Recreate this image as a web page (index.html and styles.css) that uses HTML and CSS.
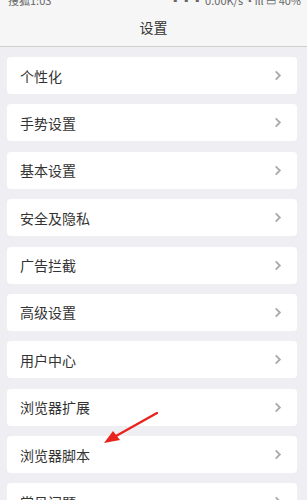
FILE: index.html
```html
<!DOCTYPE html>
<html lang="zh">
<head>
<meta charset="utf-8">
<link rel="stylesheet" href="styles.css">
</head>
<body>
<div class="page">
  <header class="topbar">
    <div class="status">
      <span class="status-left">搜狐1:03</span>
      <span class="status-right">▪▪▪ 0.00K/s ◔ ıll ▭ 40%</span>
    </div>
    <div class="title">设置</div>
  </header>
  <ul class="list">
    <li class="item"><span>个性化</span><svg class="chev" viewBox="0 0 8 12"><path d="M1.5 1.5 L6 6 L1.5 10.5"/></svg></li>
    <li class="item"><span>手势设置</span><svg class="chev" viewBox="0 0 8 12"><path d="M1.5 1.5 L6 6 L1.5 10.5"/></svg></li>
    <li class="item"><span>基本设置</span><svg class="chev" viewBox="0 0 8 12"><path d="M1.5 1.5 L6 6 L1.5 10.5"/></svg></li>
    <li class="item"><span>安全及隐私</span><svg class="chev" viewBox="0 0 8 12"><path d="M1.5 1.5 L6 6 L1.5 10.5"/></svg></li>
    <li class="item"><span>广告拦截</span><svg class="chev" viewBox="0 0 8 12"><path d="M1.5 1.5 L6 6 L1.5 10.5"/></svg></li>
    <li class="item"><span>高级设置</span><svg class="chev" viewBox="0 0 8 12"><path d="M1.5 1.5 L6 6 L1.5 10.5"/></svg></li>
    <li class="item"><span>用户中心</span><svg class="chev" viewBox="0 0 8 12"><path d="M1.5 1.5 L6 6 L1.5 10.5"/></svg></li>
    <li class="item"><span>浏览器扩展</span><svg class="chev" viewBox="0 0 8 12"><path d="M1.5 1.5 L6 6 L1.5 10.5"/></svg></li>
    <li class="item"><span>浏览器脚本</span><svg class="chev" viewBox="0 0 8 12"><path d="M1.5 1.5 L6 6 L1.5 10.5"/></svg></li>
    <li class="item"><span>常见问题</span><svg class="chev" viewBox="0 0 8 12"><path d="M1.5 1.5 L6 6 L1.5 10.5"/></svg></li>
  </ul>
  <svg class="arrow" viewBox="0 0 307 500" width="307" height="500">
    <path d="M157 413 L116 436" stroke="#e8231f" stroke-width="2.4" stroke-linecap="round" fill="none"/>
    <path d="M104 443 L113 431 L120 440 Z" fill="#e8231f"/>
  </svg>
</div>
</body>
</html>
```
FILE: styles.css
```css
* { box-sizing: border-box; }
html, body { margin: 0; padding: 0; }
body {
  width: 307px;
  height: 500px;
  overflow: hidden;
  background: #efeff3;
  font-family: "Noto Sans CJK SC", "Noto Sans", sans-serif;
}
.page { position: relative; width: 307px; height: 500px; overflow: hidden; }
.topbar {
  height: 47px;
  background: #f6f6f6;
  border-bottom: 1px solid #cfcfcf;
  position: relative;
}
.status {
  display: flex;
  justify-content: space-between;
  padding: 0 6px 0 8px;
  height: 8px;
  overflow: hidden;
  font-size: 11px;
  line-height: 8px;
  color: #666;
}
.status-left, .status-right { margin-top: -4px; display: block; }
.title {
  text-align: center;
  font-size: 14px;
  line-height: 20px;
  color: #333;
  margin-top: 9px;
}
.list {
  list-style: none;
  margin: 0;
  padding: 10px 10px 0 7px;
}
.item {
  height: 37px;
  margin-bottom: 10.375px;
  background: #fff;
  border-radius: 4px;
  display: flex;
  align-items: center;
  justify-content: space-between;
  padding: 0 15px 0 13px;
  font-size: 14px;
  color: #333;
}
.chev {
  width: 8px;
  height: 11px;
  fill: none;
  stroke: #aaaaaa;
  stroke-width: 2;
}
.arrow {
  position: absolute;
  left: 0;
  top: 0;
  pointer-events: none;
}
```
